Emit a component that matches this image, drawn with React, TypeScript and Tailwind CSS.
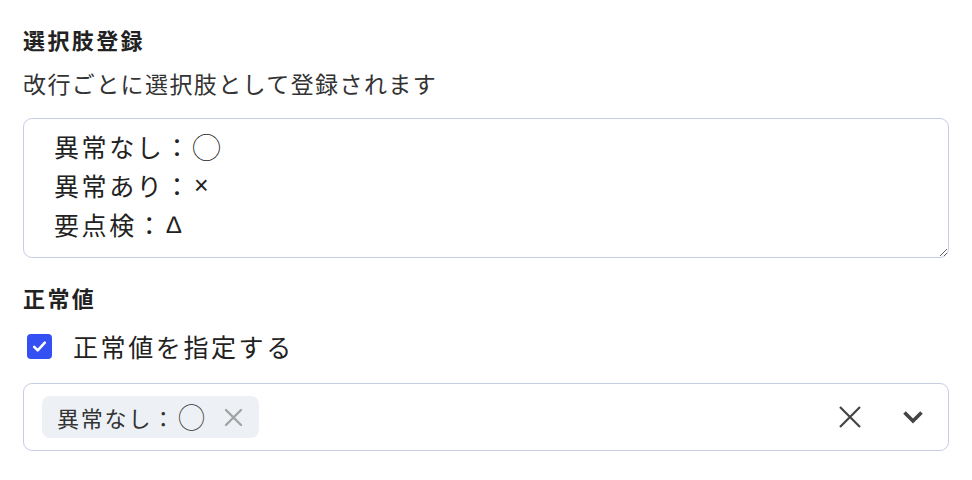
import React from "react";

const choices = [
  { label: "異常なし：", mark: "◯", markClass: "text-[29px] font-light" },
  { label: "異常あり：", mark: "×", markClass: "ml-[2px] font-['Liberation_Sans',sans-serif] text-[25px]" },
  { label: "要点検：", mark: "∆", markClass: "ml-[2px] font-['Liberation_Sans',sans-serif] text-[24px]" },
];

const App: React.FC = () => {
  return (
    <div className="min-h-[480px] w-full bg-white px-[23px] pt-[26px] font-['Noto_Sans_CJK_JP','Noto_Sans',sans-serif] text-[#222]">
      {/* 選択肢 */}
      <h2 className="text-[22px] font-bold leading-[26px] tracking-[2.4px]">選択肢登録</h2>
      <p className="mt-[16px] text-[23px] leading-[30px] tracking-[1.4px] text-[#333]">
        改行ごとに選択肢として登録されます
      </p>
      <div className="mt-[20px] h-[140px] w-full resize-y overflow-auto rounded-[9px] border border-[#c8cde2] bg-white pl-[30px] pr-3 pt-[8px]">
        {choices.map((c, i) => (
          <div key={i} className="flex h-[39px] items-center text-[25px] tracking-[2.6px] text-[#222]">
            <span>{c.label}</span>
            <span className={c.markClass}>{c.mark}</span>
          </div>
        ))}
      </div>

      {/* 正常値 */}
      <h2 className="mt-[26px] text-[22px] font-bold leading-[26px] tracking-[2.4px]">正常値</h2>
      <label className="mt-[21px] flex h-[30px] items-center">
        <span className="ml-[4px] flex h-[25px] w-[25px] items-center justify-center rounded-[4px] bg-[#3550f2]">
          <svg width="17" height="17" viewBox="0 0 24 24" fill="none">
            <path d="M4.5 12.5l5 5L19.5 6.5" stroke="white" strokeWidth="3.6" strokeLinecap="round" strokeLinejoin="round" />
          </svg>
        </span>
        <span className="ml-[21px] text-[25px] leading-[30px] tracking-[2.6px] text-[#222]">正常値を指定する</span>
      </label>

      <div className="mt-[22px] flex h-[68px] items-center rounded-[9px] border border-[#c8cde2] pl-[18px] pr-[24px]">
        <div className="flex h-[42px] items-center rounded-[8px] bg-[#edf1f5] pl-[15px] pr-[16px]">
          <span className="text-[22px] leading-[28px] tracking-[1.8px] text-[#333]">異常なし：</span>
          <span className="ml-[2px] text-[27px] font-light leading-[28px] text-[#333]">◯</span>
          <svg className="ml-[19px]" width="19" height="19" viewBox="0 0 19 19">
            <path d="M2 2L17 17M17 2L2 17" stroke="#a3a3a3" strokeWidth="2.4" strokeLinecap="round" />
          </svg>
        </div>
        <div className="flex-1" />
        <svg width="24" height="24" viewBox="0 0 24 24">
          <path d="M2 2L22 22M22 2L2 22" stroke="#444" strokeWidth="2.2" />
        </svg>
        <svg className="ml-[40px]" width="22" height="14" viewBox="0 0 22 14">
          <path d="M2.5 2.5L11 11L19.5 2.5" stroke="#444" strokeWidth="3.6" fill="none" strokeLinejoin="miter" />
        </svg>
      </div>
    </div>
  );
};

export default App;
